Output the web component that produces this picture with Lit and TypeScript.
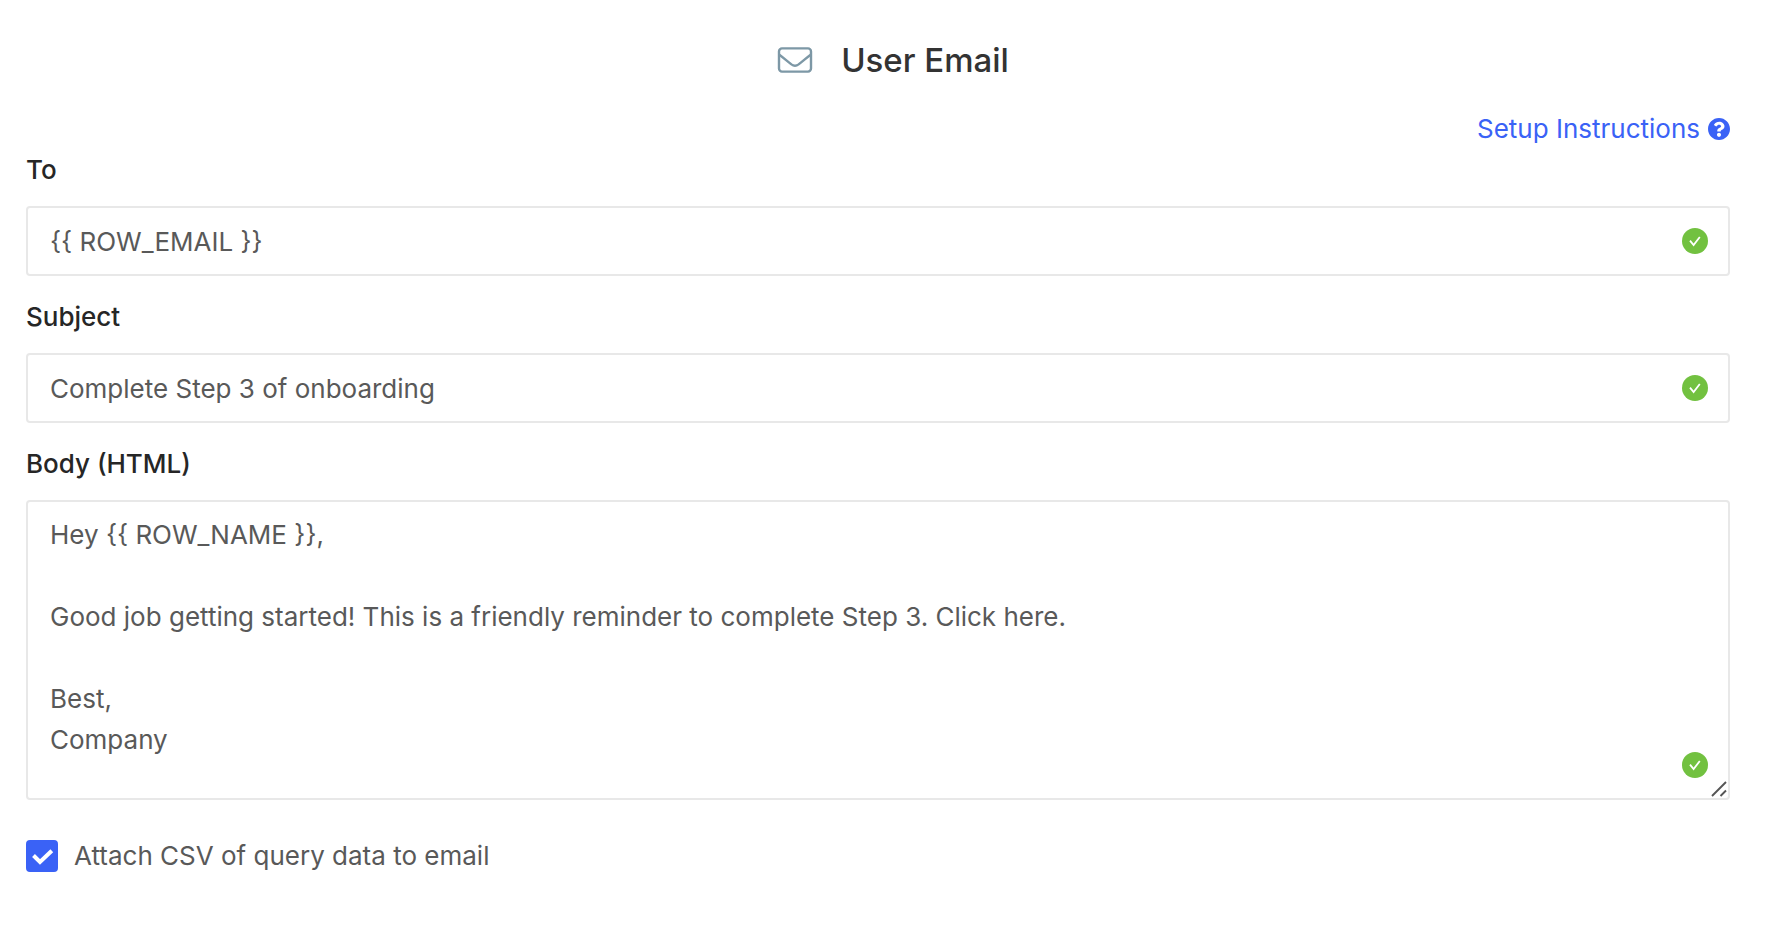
import { LitElement, html, css, svg } from "lit";
import { customElement, property, state } from "lit/decorators.js";

@customElement("valid-mark")
class ValidMark extends LitElement {
  static styles = css`
    :host { display: block; width: 26px; height: 26px; }
    svg { display: block; width: 100%; height: 100%; }
  `;
  render() {
    return html`<svg viewBox="0 0 26 26" role="img" aria-label="Valid">
      <circle cx="13" cy="13" r="13" fill="#72c140" />
      <path d="M8 12.6 11.6 17 17.8 9" fill="none" stroke="#fff" stroke-width="1.8" />
    </svg>`;
  }
}

@customElement("app-root")
class AppRoot extends LitElement {
  @property() heading = "User Email";
  @state() private to = "{{ ROW_EMAIL }}";
  @state() private subject = "Complete Step 3 of onboarding";
  @state() private body =
    "Hey {{ ROW_NAME }},\n\nGood job getting started! This is a friendly reminder to complete Step 3. Click here.\n\nBest,\nCompany";
  @state() private attach = true;

  static styles = css`
    :host {
      display: block;
      box-sizing: border-box;
      min-height: 100vh;
      padding: 36px 42px 36px 26px;
      background: #fff;
      color: #595959;
      font-family: Inter, "Liberation Sans", sans-serif;
      font-size: 26px;
      line-height: 41px;
    }
    *, *::before, *::after { box-sizing: border-box; }
    .header {
      display: flex;
      align-items: center;
      justify-content: center;
      gap: 28px;
      margin-bottom: 24px;
      padding-left: 30px;
    }
    .header-icon { width: 36px; height: 26px; }
    .title {
      margin: 0;
      color: #333;
      font-size: 33px;
      font-weight: 500;
      line-height: 48px;
    }
    .help { display: flex; justify-content: flex-end; }
    .help-link {
      display: flex;
      align-items: center;
      gap: 8px;
      color: #3a62f6;
      text-decoration: none;
    }
    .help-icon { width: 22px; height: 22px; }
    .form { display: flex; flex-direction: column; gap: 20px; }
    .field { display: flex; flex-direction: column; gap: 16px; }
    .label { color: #262626; font-weight: 500; }
    .control { position: relative; }
    .input, .textarea {
      display: block;
      width: 100%;
      margin: 0;
      border: 2px solid #e8e8e8;
      border-radius: 4px;
      background: #fff;
      color: inherit;
      font: inherit;
      outline: none;
    }
    .input { height: 70px; padding: 0 64px 0 22px; }
    .textarea { height: 300px; padding: 12px 64px 12px 22px; resize: vertical; overflow: auto; }
    .textarea::-webkit-resizer { background: transparent; }
    .mark { position: absolute; right: 22px; bottom: 22px; pointer-events: none; }
    .grip { position: absolute; right: 3px; bottom: 3px; width: 16px; height: 16px; pointer-events: none; }
    .option {
      display: flex;
      align-items: center;
      align-self: flex-start;
      gap: 16px;
      margin-top: 15px;
    }
    .checkbox {
      appearance: none;
      display: grid;
      width: 32px;
      height: 32px;
      margin: 0;
      border: 2px solid #d9d9d9;
      border-radius: 4px;
      background: #fff;
    }
    .checkbox:checked { border-color: #3a62f6; background: #3a62f6; }
    .checkbox-wrap { display: grid; }
    .checkbox-wrap > * { grid-area: 1 / 1; }
    .tick { width: 32px; height: 32px; pointer-events: none; }
  `;

  render() {
    return html`
      <header class="header">
        <svg class="header-icon" viewBox="0 0 36 26" aria-hidden="true">
          <g fill="none" stroke="#7d98a6" stroke-width="2.4">
            <rect x="2" y="1.400" width="32" height="23.200" rx="3" />
            <path d="M2 7.500c4.800 3.600 8.400 6.800 12.400 9.900 2.600 1.900 4.600 1.900 7.200 0C25.600 14.300 29.200 11.100 34 7.500" />
          </g>
        </svg>
        <h1 class="title">${this.heading}</h1>
      </header>
      <div class="help">
        <a class="help-link" href="#setup">
          <span>Setup Instructions</span>
          <svg class="help-icon" viewBox="8 8 496 496" aria-hidden="true">
            <path fill="currentColor" d="M504 256c0 136.997-111.043 248-248 248S8 392.997 8 256C8 119.083 119.043 8 256 8s248 111.083 248 248zM262.655 90c-54.497 0-89.255 22.957-116.549 63.758-3.536 5.286-2.353 12.415 2.715 16.258l34.699 26.310c5.205 3.947 12.621 3.008 16.665-2.122 17.864-22.658 30.113-35.797 57.303-35.797 20.429 0 45.698 13.148 45.698 32.958 0 14.976-12.363 22.667-32.534 33.976C247.128 238.528 216 254.941 216 296v4c0 6.627 5.373 12 12 12h56c6.627 0 12-5.373 12-12v-1.333c0-28.462 83.186-29.647 83.186-106.667 0-58.002-60.165-102-116.531-102zM256 338c-25.365 0-46 20.635-46 46 0 25.364 20.635 46 46 46s46-20.636 46-46c0-25.365-20.635-46-46-46z" />
          </svg>
        </a>
      </div>
      <form class="form" @submit=${(e: Event) => e.preventDefault()}>
        <div class="field">
          <label class="label" for="to">To</label>
          <div class="control">
            <input class="input" id="to" type="text" .value=${this.to}
              @input=${(e: any) => (this.to = e.target.value)} />
            <valid-mark class="mark"></valid-mark>
          </div>
        </div>
        <div class="field">
          <label class="label" for="subject">Subject</label>
          <div class="control">
            <input class="input" id="subject" type="text" .value=${this.subject}
              @input=${(e: any) => (this.subject = e.target.value)} />
            <valid-mark class="mark"></valid-mark>
          </div>
        </div>
        <div class="field">
          <label class="label" for="body">Body (HTML)</label>
          <div class="control">
            <textarea class="textarea" id="body" spellcheck="false" .value=${this.body}
              @input=${(e: any) => (this.body = e.target.value)}></textarea>
            <valid-mark class="mark"></valid-mark>
            <svg class="grip" viewBox="0 0 16 16" aria-hidden="true">
              <path d="M1 15 15 1M9.500 15 15 9.500" fill="none" stroke="#555" stroke-width="1.900" />
            </svg>
          </div>
        </div>
        <label class="option">
          <span class="checkbox-wrap">
            <input class="checkbox" type="checkbox" .checked=${this.attach}
              @change=${(e: any) => (this.attach = e.target.checked)} />
            <svg class="tick" viewBox="0 0 32 32" aria-hidden="true">
              ${this.attach
                ? svg`<path d="M7.500 15.500 14 22 25.800 10.800" fill="none" stroke="#fff" stroke-width="4" />`
                : null}
            </svg>
          </span>
          <span>Attach CSV of query data to email</span>
        </label>
      </form>
    `;
  }
}
